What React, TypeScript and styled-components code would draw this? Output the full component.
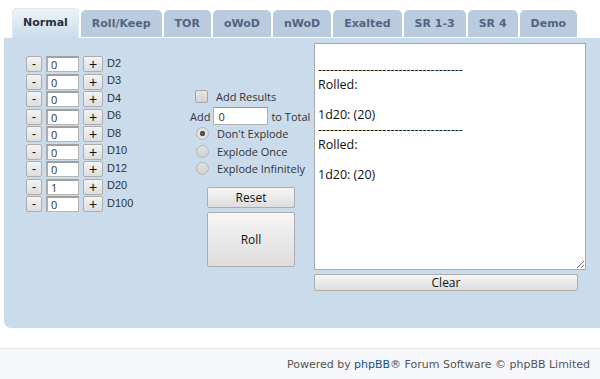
import React from "react";
import styled, { createGlobalStyle } from "styled-components";

const GlobalStyle = createGlobalStyle`
  body {
    margin: 0;
    background: #ffffff;
    font-family: "Open Sans", "Noto Sans", sans-serif;
  }
`;

const tabs = ["Normal", "Roll/Keep", "TOR", "oWoD", "nWoD", "Exalted", "SR 1-3", "SR 4", "Demo"];
const dice = [
  { label: "D2", value: "0" },
  { label: "D3", value: "0" },
  { label: "D4", value: "0" },
  { label: "D6", value: "0" },
  { label: "D8", value: "0" },
  { label: "D10", value: "0" },
  { label: "D12", value: "0" },
  { label: "D20", value: "1" },
  { label: "D100", value: "0" },
];
const dashes = "-".repeat(36);
const log = `\n${dashes}\nRolled:\n\n1d20: (20)\n${dashes}\nRolled:\n\n1d20: (20)`;

const App = () => {
  return (
    <Page>
      <GlobalStyle />
      <TabBar>
        {tabs.map((t, i) => (
          <Tab key={t} $active={i === 0}>{t}</Tab>
        ))}
      </TabBar>
      <Panel>
        <DiceColumn>
          {dice.map((d) => (
            <DieRow key={d.label}>
              <SmallButton>-</SmallButton>
              <NumBox defaultValue={d.value} />
              <SmallButton $wide>+</SmallButton>
              <DieLabel>{d.label}</DieLabel>
            </DieRow>
          ))}
        </DiceColumn>
        <Options>
          <CheckRow>
            <Box />
            <span>Add Results</span>
          </CheckRow>
          <AddRow>
            <span>Add</span>
            <AddBox defaultValue="0" />
            <span>to Total</span>
          </AddRow>
          <Radio $checked>Don't Explode</Radio>
          <Radio>Explode Once</Radio>
          <Radio>Explode Infinitely</Radio>
          <Button $h={21} $gap={9.5}>Reset</Button>
          <Button $h={55} $gap={4}>Roll</Button>
        </Options>
        <Output>
          <Log readOnly defaultValue={log} />
          <ClearButton>Clear</ClearButton>
        </Output>
      </Panel>
      <Footer>
        Powered by <FooterLink>phpBB</FooterLink>® Forum Software © phpBB Limited
      </Footer>
    </Page>
  );
};

export default App;

const Page = styled.div`
  width: 600px;
  height: 379px;
  overflow: hidden;
`;

const TabBar = styled.div`
  display: flex;
  align-items: flex-end;
  gap: 2px;
  padding: 8px 0 0 12px;
  height: 38px;
  box-sizing: border-box;
`;

const Tab = styled.div<{ $active?: boolean }>`
  font-family: "DejaVu Sans", Verdana, sans-serif;
  font-weight: bold;
  font-size: 11px;
  padding: 0 11px;
  border-radius: 5px 5px 0 0;
  display: flex;
  align-items: center;
  height: ${(p) => (p.$active ? "30px" : "27px")};
  margin-bottom: ${(p) => (p.$active ? "0" : "1px")};
  color: ${(p) => (p.$active ? "#28313f" : "#536482")};
  background: ${(p) =>
    p.$active ? "linear-gradient(to bottom, #eef4fa 0%, #cadceb 100%)" : "#b9cbdc"};
  box-shadow: ${(p) => (p.$active ? "inset 1px 1px 0 #dfe9f3, inset -1px 0 0 #dfe9f3" : "none")};
  padding-bottom: ${(p) => (p.$active ? "2px" : "0")};
  box-sizing: border-box;
`;

const Panel = styled.div`
  margin-left: 4px;
  height: 290px;
  background: #cadceb;
  border-radius: 0 0 0 7px;
  display: grid;
  grid-template-columns: 186px 124px 1fr;
  font-size: 11px;
  color: #333;
`;

const DiceColumn = styled.div`
  padding: 18px 0 0 22px;
  display: flex;
  flex-direction: column;
  gap: 1.5px;
`;

const DieRow = styled.div`
  display: flex;
  align-items: center;
  gap: 4px;
  height: 16px;
`;

const SmallButton = styled.div<{ $wide?: boolean }>`
  width: ${(p) => (p.$wide ? "20px" : "16px")};
  height: 16px;
  box-sizing: border-box;
  border: 1px solid #adadad;
  border-radius: 2px;
  background: linear-gradient(to bottom, #f4f4f4, #dedede);
  display: flex;
  align-items: center;
  justify-content: center;
  font-family: "Liberation Sans", Arial, sans-serif;
  font-size: ${(p) => (p.$wide ? "14px" : "12px")};
  color: #111;
  line-height: 1;
`;

const NumBox = styled.input`
  width: 33px;
  height: 16px;
  box-sizing: border-box;
  border: 1px solid #b5b5b5;
  border-top: 2px solid #a0a0a0;
  border-left: 2px solid #ababab;
  background: #fff;
  padding: 0 0 0 3px;
  font-family: "Open Sans", sans-serif;
  font-size: 11px;
  color: #333;
  outline: none;
`;

const DieLabel = styled.span`
  font-family: "Liberation Sans", Arial, sans-serif;
  font-size: 11px;
  color: #333;
  margin-top: -3px;
`;

const Options = styled.div`
  padding-top: 52px;
  display: flex;
  flex-direction: column;
`;

const CheckRow = styled.label`
  display: flex;
  align-items: center;
  gap: 8px;
  padding-left: 5px;
  height: 13px;
  margin-bottom: 4px;
`;

const Box = styled.span`
  width: 13px;
  height: 13px;
  box-sizing: border-box;
  border: 1px solid #a6a6a6;
  border-radius: 2px;
  background: linear-gradient(to bottom, #e6e6e6, #d2d2d2);
`;

const AddRow = styled.div`
  display: flex;
  align-items: center;
  gap: 3px;
  height: 18px;
`;

const AddBox = styled.input`
  width: 55px;
  height: 18px;
  box-sizing: border-box;
  border: 1px solid #b0b0b0;
  border-top-color: #999;
  background: #fff;
  padding: 0 0 0 4px;
  font-family: "Open Sans", sans-serif;
  font-size: 11px;
  color: #333;
  outline: none;
`;

const Radio = styled.div<{ $checked?: boolean }>`
  display: flex;
  align-items: center;
  gap: 8px;
  padding-left: 6px;
  height: 17.5px;

  &::before {
    content: "";
    width: 13px;
    height: 13px;
    box-sizing: border-box;
    border-radius: 50%;
    border: 1px solid #b4b4b4;
    background: ${(p) =>
      p.$checked
        ? "radial-gradient(circle, #555 0 2.5px, #e2e2e2 3px)"
        : "linear-gradient(to bottom, #e2e2e2, #d0d0d0)"};
  }
`;

const Button = styled.div<{ $h: number; $gap: number }>`
  width: 88px;
  height: ${(p) => p.$h}px;
  margin: ${(p) => p.$gap}px 0 0 17px;
  box-sizing: border-box;
  border: 1px solid #adadad;
  border-radius: 2px;
  background: linear-gradient(to bottom, #f6f6f6, #dddddd);
  display: flex;
  align-items: center;
  justify-content: center;
  font-size: 12px;
  color: #111;
`;

const Output = styled.div`
  padding-top: 5px;
  display: flex;
  flex-direction: column;
  gap: 4px;
`;

const Log = styled.textarea`
  width: 272px;
  height: 227px;
  box-sizing: border-box;
  border: 1px solid #a9a9a9;
  background: #fff;
  padding: 3px 3px;
  font-family: "Open Sans", "Noto Sans", sans-serif;
  font-size: 12.5px;
  line-height: 15px;
  color: #111;
  resize: both;
  outline: none;
  overflow: hidden;
`;

const ClearButton = styled.div`
  width: 264px;
  height: 17px;
  box-sizing: border-box;
  border: 1px solid #adadad;
  border-radius: 2px;
  background: linear-gradient(to bottom, #f6f6f6, #dddddd);
  display: flex;
  align-items: center;
  justify-content: center;
  font-size: 12px;
  color: #111;
`;

const Footer = styled.div`
  margin-top: 20px;
  border-top: 1px solid #e5e8ec;
  background: #f5f7fa;
  height: 31px;
  box-sizing: border-box;
  display: flex;
  align-items: center;
  justify-content: flex-end;
  padding: 0 10px 0 0;
  font-family: "DejaVu Sans", Verdana, sans-serif;
  font-size: 11px;
  color: #555;
`;

const FooterLink = styled.span`
  color: #105289;
  margin-left: 0.3em;
`;
